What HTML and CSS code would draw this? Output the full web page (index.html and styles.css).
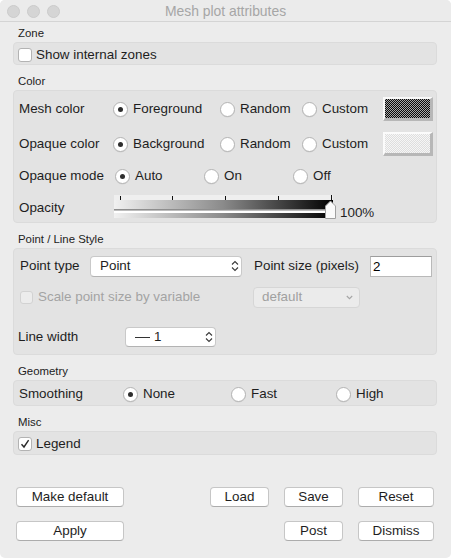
FILE: index.html
```html
<!DOCTYPE html>
<html>
<head>
<meta charset="utf-8">
<title>Mesh plot attributes</title>
<link rel="stylesheet" href="styles.css">
</head>
<body>
<div class="window">
  <div class="titlebar">
    <div class="lights"><span class="light"></span><span class="light"></span><span class="light"></span></div>
    <div class="title">Mesh plot attributes</div>
    <div></div>
  </div>
  <div class="content">
    <div class="sec-label first">Zone</div>
    <div class="box box-zone">
      <div class="check"><span class="cb"></span>Show internal zones</div>
    </div>

    <div class="sec-label">Color</div>
    <div class="box box-color">
      <div class="row c1">
        <span class="lbl w94">Mesh color</span>
        <span class="opt w107"><span class="rd on"></span>Foreground</span>
        <span class="opt w82"><span class="rd"></span>Random</span>
        <span class="opt w81"><span class="rd"></span>Custom</span>
        <span class="swatch sw-dark"></span>
      </div>
      <div class="row c2">
        <span class="lbl w94">Opaque color</span>
        <span class="opt w107"><span class="rd on"></span>Background</span>
        <span class="opt w82"><span class="rd"></span>Random</span>
        <span class="opt w81"><span class="rd"></span>Custom</span>
        <span class="swatch sw-light"></span>
      </div>
      <div class="row c3">
        <span class="lbl w96">Opaque mode</span>
        <span class="opt w89"><span class="rd on"></span>Auto</span>
        <span class="opt w89"><span class="rd"></span>On</span>
        <span class="opt"><span class="rd"></span>Off</span>
      </div>
      <div class="row c4">
        <span class="lbl w95 op-lbl">Opacity</span>
        <svg class="slider" width="222" height="24" viewBox="0 0 222 24">
          <defs>
            <linearGradient id="grad" x1="0" x2="1" y1="0" y2="0">
              <stop offset="0" stop-color="#f1f1f1"/>
              <stop offset="0.5" stop-color="#8a8a8a"/>
              <stop offset="1" stop-color="#000"/>
            </linearGradient>
          </defs>
          <rect x="0" y="0" width="219" height="5" fill="#efefef"/>
          <rect x="0" y="5" width="219" height="18" fill="url(#grad)"/>
          <g fill="#111">
            <rect x="6" y="1" width="1" height="4"/>
            <rect x="58" y="1" width="1" height="4"/>
            <rect x="111" y="1" width="1" height="4"/>
            <rect x="164" y="1" width="1" height="4"/>
            <rect x="217" y="0" width="1" height="5"/>
          </g>
          <rect x="0" y="14" width="213" height="1" fill="#8e8e8e"/>
          <rect x="0" y="15" width="213" height="1" fill="#bdbdbd"/>
          <rect x="0" y="16" width="213" height="2" fill="#ffffff"/>
          <path d="M211.5 11 L216.5 6 L221.5 11 V23.5 H211.5 Z" fill="#fafafa" stroke="#a0a0a0"/>
        </svg>
        <span class="pct">100%</span>
      </div>
    </div>

    <div class="sec-label">Point / Line Style</div>
    <div class="box box-point">
      <div class="row p1">
        <span class="lbl w70">Point type</span>
        <span class="select w152">
          <span>Point</span>
          <svg class="updown" width="8" height="12" viewBox="0 0 8 12"><path d="M1 4.5 L4 1.5 L7 4.5 M1 7.5 L4 10.5 L7 7.5" fill="none" stroke="#3a3a3a" stroke-width="1.1"/></svg>
        </span>
        <span class="lbl psize">Point size (pixels)</span>
        <span class="input">2</span>
      </div>
      <div class="row p2">
        <span class="check disabled w233"><span class="cb dis"></span>Scale point size by variable</span>
        <span class="select dis-select">
          <span>default</span>
          <svg width="7" height="5" viewBox="0 0 7 5"><path d="M0.8 1 L3.5 3.7 L6.2 1" fill="none" stroke="#a5a5a5" stroke-width="1.1"/></svg>
        </span>
      </div>
      <div class="row p3">
        <span class="lbl w107">Line width</span>
        <span class="select spin">
          <span class="lw"><span class="dash"></span>1</span>
          <svg class="updown" width="8" height="12" viewBox="0 0 8 12"><path d="M1 4.5 L4 1.5 L7 4.5 M1 7.5 L4 10.5 L7 7.5" fill="none" stroke="#3a3a3a" stroke-width="1.1"/></svg>
        </span>
      </div>
    </div>

    <div class="sec-label">Geometry</div>
    <div class="box box-geo">
      <div class="row g1">
        <span class="lbl w104">Smoothing</span>
        <span class="opt w108"><span class="rd on"></span>None</span>
        <span class="opt w105"><span class="rd"></span>Fast</span>
        <span class="opt"><span class="rd"></span>High</span>
      </div>
    </div>

    <div class="sec-label">Misc</div>
    <div class="box box-misc">
      <div class="check"><span class="cb on"><svg width="10" height="10" viewBox="0 0 10 10"><path d="M1.5 5.2 L4 8 L8.6 1.2" fill="none" stroke="#2a2a2a" stroke-width="1.4"/></svg></span>Legend</div>
    </div>

    <div class="buttons">
      <button class="btn">Make default</button>
      <span></span>
      <button class="btn">Load</button>
      <button class="btn">Save</button>
      <button class="btn">Reset</button>
      <button class="btn">Apply</button>
      <span></span>
      <span></span>
      <button class="btn">Post</button>
      <button class="btn">Dismiss</button>
    </div>
  </div>
</div>
</body>
</html>
```
FILE: styles.css
```css
* { box-sizing: border-box; }
html, body { margin: 0; padding: 0; background: #ffffff; }
body {
  font-family: "Liberation Sans", Arial, sans-serif;
  font-size: 13.4px;
  line-height: 16px;
  color: #1e1e1e;
}
.window {
  width: 451px;
  height: 558px;
  background: #ececec;
  border-radius: 5px;
  overflow: hidden;
  display: flex;
  flex-direction: column;
}
.titlebar {
  height: 22px;
  flex: none;
  background: #ebebeb;
  border-bottom: 1px solid #d4d4d4;
  display: grid;
  grid-template-columns: 1fr auto 1fr;
  align-items: center;
  padding-top: 1px;
}
.lights { display: flex; gap: 7px; padding-left: 7px; }
.light {
  width: 13px; height: 13px; border-radius: 50%;
  background: #d5d5d5;
  border: 1px solid #cbcbcb;
}
.title { color: #a6a6a6; font-size: 13.9px; }

.content { padding: 0 14px 0 13px; display: flex; flex-direction: column; }
.sec-label {
  font-size: 11.4px;
  line-height: 14px;
  height: 14px;
  padding-left: 5px;
  margin-top: 9px;
  margin-bottom: 2px;
  color: #222;
}
.sec-label.first { margin-top: 4px; }
.box {
  background: #e3e3e3;
  border: 1px solid #dbdbdb;
  border-radius: 4px;
}
.box-zone { height: 23px; padding: 3px 0 0 4px; display: flex; align-items: center; }
.box-misc { height: 24px; padding: 2px 0 0 4px; display: flex; align-items: center; }
.box-color { height: 133px; padding-top: 2px; }
.box-point { height: 107px; padding-top: 6px; }
.box-geo { height: 26px; padding-top: 1px; }

.row { display: flex; align-items: center; padding-left: 5px; }
.c1 { height: 32px; }
.c2 { height: 38px; }
.c3 { height: 26px; }
.c4 { height: 34px; align-items: flex-start; }
.op-lbl { margin-top: 11px; }
.slider { margin-top: 6px; display: block; flex: none; }
.pct { margin-top: 16px; margin-left: 4px; }

.p1 { height: 22px; padding-left: 6px; }
.p2 { height: 22px; padding-left: 6px; margin-top: 9px; }
.p3 { height: 22px; padding-left: 4px; margin-top: 18px; }
.g1 { height: 24px; }

.lbl { flex: none; white-space: nowrap; }
.w70 { width: 70px; }
.w94 { width: 94px; }
.w95 { width: 95px; }
.w96 { width: 96px; }
.w104 { width: 104px; }
.w107 { width: 107px; }
.w82 { width: 82px; }
.w81 { width: 81px; }
.w89 { width: 89px; }
.w108 { width: 108px; }
.w105 { width: 105px; }
.w152 { width: 152px; }
.w233 { width: 233px; }

.opt { display: flex; align-items: center; flex: none; white-space: nowrap; }
.rd {
  width: 15px; height: 15px; flex: none;
  border-radius: 50%;
  background: #ffffff;
  border: 1px solid #b4b4b4;
  margin-right: 5px;
  display: flex; align-items: center; justify-content: center;
  box-shadow: 0 0.5px 0 rgba(0,0,0,0.08);
}
.rd.on::after {
  content: "";
  width: 5px; height: 5px; border-radius: 50%;
  background: #2e2e2e;
}

.swatch {
  width: 50px; height: 24px; flex: none;
  border-style: solid;
  border-width: 2px 3px 3px 2px;
  border-color: #fbfbfb #b7b7b7 #b7b7b7 #fbfbfb;
}
.sw-dark {
  background: repeating-conic-gradient(#0a0a0a 0 25%, #a8a8a8 0 50%) 0 0 / 2px 2px;
}
.sw-light {
  background: repeating-conic-gradient(#f6f6f6 0 25%, #dedede 0 50%) 0 0 / 2px 2px;
}

.check { display: flex; align-items: center; white-space: nowrap; }
.cb {
  width: 14px; height: 14px; flex: none;
  background: #ffffff;
  border: 1px solid #b3b3b3;
  border-radius: 3px;
  margin-right: 4px;
  display: flex; align-items: center; justify-content: center;
}
.check.disabled { color: #a3a3a3; }
.cb.dis {
  width: 13px; height: 13px;
  background: #ececec;
  border-color: #d2d2d2;
  margin-right: 5px;
}

.select {
  display: flex; align-items: center; justify-content: space-between;
  height: 21px; flex: none;
  background: #ffffff;
  border: 1px solid #c9c9c9;
  border-bottom-color: #b3b3b3;
  border-radius: 4px;
  padding: 0 2px 0 9px;
}
.updown { display: block; }
.psize { margin-left: 12px; width: 116px; }
.input {
  width: 62px; height: 21px; flex: none;
  background: #ffffff;
  border: 1px solid #b9b9b9;
  border-top-color: #9d9d9d;
  padding-left: 2px;
  line-height: 19px;
  color: #000;
}
.dis-select {
  width: 107px;
  background: #ebebeb;
  border-color: #d6d6d6;
  color: #a0a0a0;
  padding: 0 6px 0 8px;
}
.spin { width: 91px; height: 20px; padding-left: 9px; }
.lw { display: flex; align-items: center; }
.dash { width: 15px; height: 1px; background: #333; margin-right: 4px; }

.buttons {
  margin-top: 32px;
  padding: 0 3px;
  display: grid;
  grid-template-columns: 108px 1fr 59px 59px 76px;
  column-gap: 15px;
  row-gap: 14px;
}
.btn {
  height: 20px;
  background: #ffffff;
  border: 1px solid #c6c6c6;
  border-bottom-color: #acacac;
  border-radius: 4px;
  font-family: "Liberation Sans", Arial, sans-serif;
  font-size: 13.4px;
  line-height: 16px;
  color: #1e1e1e;
  padding: 0;
  text-align: center;
}
```
